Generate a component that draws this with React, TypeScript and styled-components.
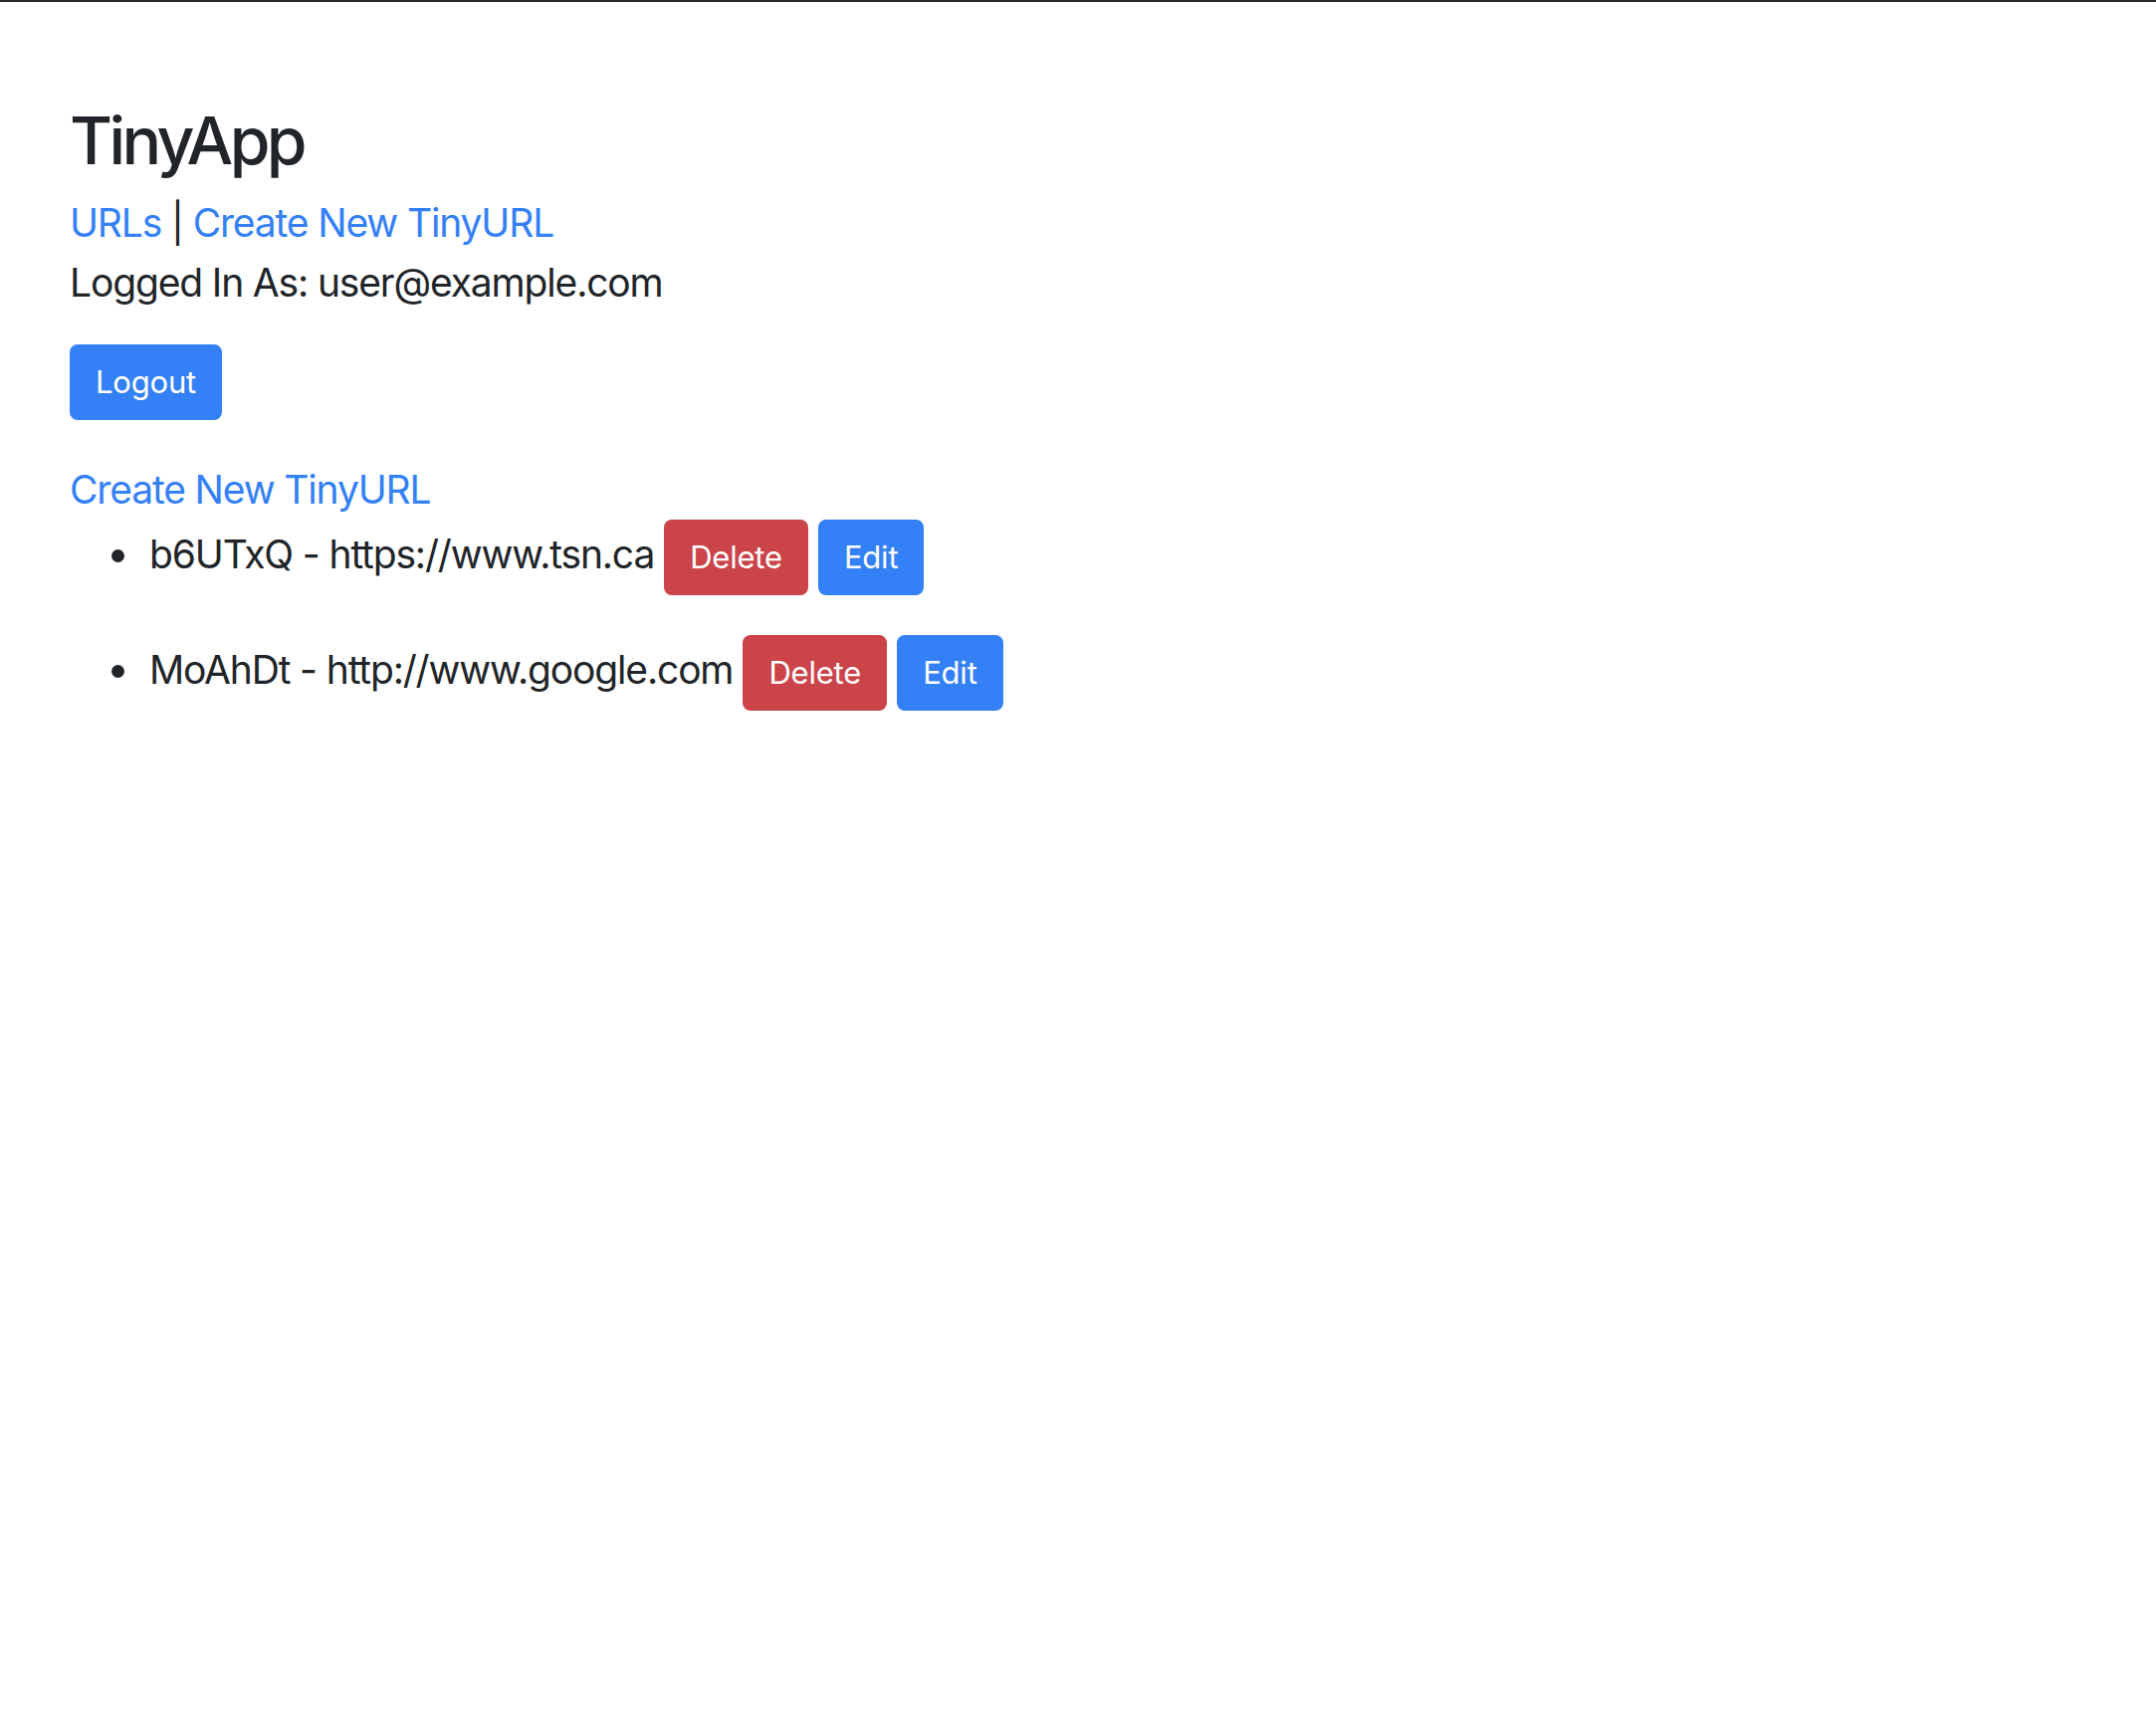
import React from "react";
import styled, { createGlobalStyle } from "styled-components";

const GlobalStyle = createGlobalStyle`
  html, body {
    margin: 0;
    padding: 0;
    background: #ffffff;
  }
  body {
    border-top: 2px solid #2a2a2a;
    font-family: Inter, "Noto Sans", sans-serif;
    color: #212529;
  }
`;

const Page = styled.main`
  display: flex;
  flex-direction: column;
  align-items: flex-start;
  padding: 100px 70px 0;
`;

const Title = styled.h1`
  margin: 0 0 13px;
  font-size: 66px;
  font-weight: 500;
  line-height: 1.2;
  letter-spacing: -3.6px;
  color: #212529;
`;

const TextLine = styled.div`
  font-size: 39px;
  line-height: 60px;
  font-weight: 400;
  letter-spacing: -1.15px;
  color: #212529;
`;

const Link = styled.a`
  color: #3480f6;
  text-decoration: none;
  cursor: pointer;
`;

const CreateLink = styled(Link)`
  display: block;
  margin-top: 40px;
  font-size: 39px;
  line-height: 60px;
  letter-spacing: -1.15px;
`;

const Button = styled.button<{ $variant: "primary" | "danger" }>`
  display: inline-block;
  font-family: inherit;
  font-size: 31px;
  font-weight: 400;
  line-height: 48px;
  padding: 12px 24px;
  border: 2px solid ${(p) => (p.$variant === "danger" ? "#cb444a" : "#3480f6")};
  border-radius: 8px;
  background: ${(p) => (p.$variant === "danger" ? "#cb444a" : "#3480f6")};
  color: #ffffff;
  cursor: pointer;
  letter-spacing: -0.2px;
`;

const LogoutButton = styled(Button)`
  margin-top: 32px;
`;

const UrlList = styled.ul`
  list-style: none;
  margin: 0;
  padding: 0 0 0 42px;
  display: flex;
  flex-direction: column;
  gap: 40px;
`;

const UrlRow = styled.li`
  display: flex;
  align-items: baseline;
  gap: 10px;
`;

const Bullet = styled.span`
  align-self: center;
  width: 13px;
  height: 13px;
  border-radius: 50%;
  background: #212529;
  margin: 0 15px 4px 0;
  flex: none;
`;

const UrlText = styled.span`
  font-size: 39px;
  line-height: 60px;
  letter-spacing: -1.15px;
  color: #212529;
`;

const urls = [
  { id: "b6UTxQ", long: "https://www.tsn.ca" },
  { id: "MoAhDt", long: "http://www.google.com" },
];

export default function App() {
  return (
    <>
      <GlobalStyle />
      <Page>
        <Title>TinyApp</Title>
        <TextLine>
          <Link>URLs</Link> | <Link>Create New TinyURL</Link>
        </TextLine>
        <TextLine>Logged In As: user@example.com</TextLine>
        <LogoutButton $variant="primary">Logout</LogoutButton>
        <CreateLink>Create New TinyURL</CreateLink>
        <UrlList>
          {urls.map((u) => (
            <UrlRow key={u.id}>
              <Bullet />
              <UrlText>
                {u.id} - {u.long}
              </UrlText>
              <Button $variant="danger">Delete</Button>
              <Button $variant="primary">Edit</Button>
            </UrlRow>
          ))}
        </UrlList>
      </Page>
    </>
  );
}
